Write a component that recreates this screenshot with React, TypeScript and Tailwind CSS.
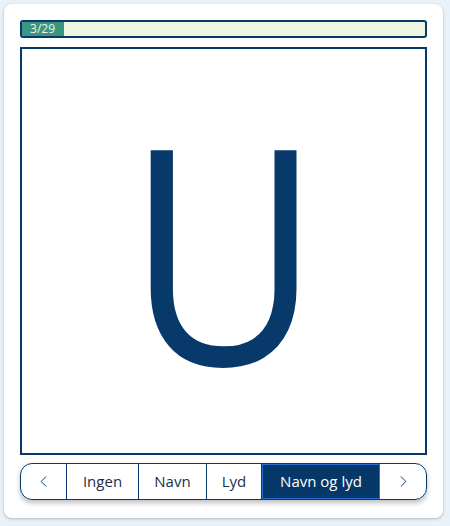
import { ChevronLeft, ChevronRight } from "lucide-react";

const modes = [
  { label: "Ingen", w: "w-[72px]" },
  { label: "Navn", w: "w-[68px]" },
  { label: "Lyd", w: "w-[55px]" },
  { label: "Navn og lyd", w: "w-[118px]" },
];

export default function App() {
  const active = "Navn og lyd";
  const current = 3;
  const total = 29;
  return (
    <div
      className="min-h-[526px] w-[450px] bg-[#e9f2f9] p-1"
      style={{ fontFamily: '"Open Sans", "Noto Sans", sans-serif' }}
    >
      <div className="flex h-[514px] w-[439px] flex-col rounded-lg bg-white px-4 pt-4 shadow-[0_1px_3px_rgba(0,0,0,0.25)]">
        {/* Progress */}
        <div className="relative h-[18px] w-full overflow-hidden rounded-[3px] border-2 border-[#073a6b] bg-[#eef5e1]">
          <div
            className="flex h-full items-center bg-[#3a9682] pl-2 text-[12px] leading-none text-[#eef5e1]"
            style={{ width: `${(current / total) * 100}%` }}
          >
            {current}/{total}
          </div>
        </div>

        {/* Letter card */}
        <div className="mt-[9px] flex h-[408px] w-full items-center justify-center border-2 border-[#073a6b]">
          <span className="inline-block -translate-y-[2px] scale-x-[0.885] text-[301px] font-medium leading-[1.1] text-[#073a6b]">
            U
          </span>
        </div>

        {/* Mode selector */}
        <div className="mt-2 flex h-[37px] w-full overflow-hidden rounded-xl border border-[#073a6b] shadow-[0_3px_5px_rgba(0,0,0,0.25)]">
          <button className="flex w-[46px] items-center justify-center border-r border-[#073a6b] text-[#073a6b]">
            <ChevronLeft size={19} strokeWidth={1.25} />
          </button>
          {modes.map((m) => (
            <button
              key={m.label}
              className={
                m.label === active
                  ? `flex ${m.w} items-center justify-center border border-[#2a6fd0] bg-[#053769] text-[15px] text-white`
                  : `flex ${m.w} items-center justify-center border-r border-[#073a6b] text-[15px] text-[#1b2f4a]`
              }
            >
              {m.label}
            </button>
          ))}
          <button className="flex flex-1 items-center justify-center text-[#073a6b]">
            <ChevronRight size={19} strokeWidth={1.25} />
          </button>
        </div>
      </div>
    </div>
  );
}
